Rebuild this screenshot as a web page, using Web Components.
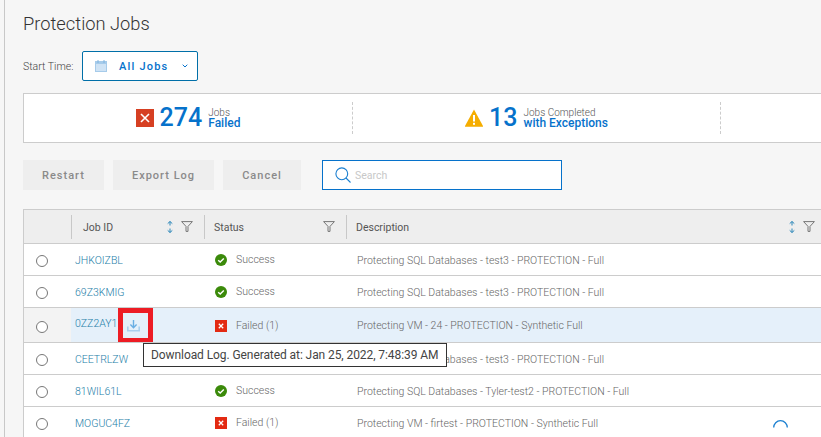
<!DOCTYPE html>
<html>
<head>
<meta charset="utf-8">
<title>Protection Jobs</title>
<style>
    html, body { margin: 0; height: 437px; overflow: hidden; background: #f6f6f6; }
</style>
</head>
<body>
<jobs-page>
    <jobs-toolbar slot="toolbar"></jobs-toolbar>
    <jobs-summary slot="summary">
        <summary-stat count="274" line1="Jobs" line2="Failed" icon="failed"></summary-stat>
        <summary-stat count="13" line1="Jobs Completed" line2="with Exceptions" icon="warning"></summary-stat>
        <summary-stat></summary-stat>
    </jobs-summary>
    <jobs-actions slot="actions"></jobs-actions>
    <jobs-table slot="table">
        <job-row job="JHKOIZBL" status="Success" text="Protecting SQL Databases - test3 - PROTECTION - Full"></job-row>
        <job-row job="69Z3KMIG" status="Success" text="Protecting SQL Databases - test3 - PROTECTION - Full"></job-row>
        <job-row job="0ZZ2AY1" status="Failed (1)" text="Protecting VM - 24 - PROTECTION - Synthetic Full" selected tip="Download Log. Generated at: Jan 25, 2022, 7:48:39 AM"></job-row>
        <job-row job="CEETRLZW" status="Failed (1)" text="Protecting SQL Databases - test3 - PROTECTION - Full" no-status></job-row>
        <job-row job="81WIL61L" status="Success" text="Protecting SQL Databases - Tyler-test2 - PROTECTION - Full"></job-row>
        <job-row job="MOGUC4FZ" status="Failed (1)" text="Protecting VM - firtest - PROTECTION - Synthetic Full" busy></job-row>
    </jobs-table>
</jobs-page>

<script>
const ICONS = {
    failed: `<svg viewBox="0 0 18 18" width="18" height="18"><rect width="18" height="18" fill="#d63f22"/><path d="M5 5l8 8M13 5l-8 8" stroke="#fff" stroke-width="1.6"/></svg>`,
    warning: `<svg viewBox="0 0 18 18" width="18" height="18"><path d="M9 .5L18 17a.6.6 0 0 1-.5.8H.5A.6.6 0 0 1 0 17z" fill="#f5ad00"/><rect x="8" y="6" width="2" height="6.5" fill="#fff"/><rect x="8" y="13.8" width="2" height="2" fill="#fff"/></svg>`,
    success: `<svg viewBox="0 0 12 12" width="12" height="12"><circle cx="6" cy="6" r="6" fill="#3b8a0a"/><path d="M3.2 6.2l2 1.9 3.6-3.6" fill="none" stroke="#fff" stroke-width="1.4"/></svg>`,
    error: `<svg viewBox="0 0 12 12" width="12" height="12"><rect width="12" height="12" fill="#e32a12"/><path d="M3.8 3.8l4.4 4.4M8.2 3.8L3.8 8.2" stroke="#fff" stroke-width="1.3"/></svg>`,
    calendar: `<svg viewBox="0 0 12 12" width="12" height="12"><rect x=".5" y="1.5" width="11" height="10" fill="#cfe3f5" stroke="#a6cbea"/><rect x="1" y="2" width="10" height="2" fill="#a6cbea"/><path d="M3 0v3M9 0v3" stroke="#7fb3e0"/></svg>`,
    chevron: `<svg viewBox="0 0 6 4" width="6" height="4"><path d="M.7.7L3 3 5.3.7" fill="none" stroke="#0672cb"/></svg>`,
    search: `<svg viewBox="0 0 16 16" width="16" height="16"><circle cx="6.8" cy="6.8" r="5.9" fill="none" stroke="#1a7fd0" stroke-width="1.1"/><path d="M11 11l4.5 4.5" stroke="#1a7fd0" stroke-width="1.1"/></svg>`,
    sort: `<svg viewBox="0 0 8 12" width="8" height="12"><path d="M4 .5v4M1.7 2.6L4 .5l2.3 2.1M4 7.5v4M1.7 9.4L4 11.5l2.3-2.1" fill="none" stroke="#2a86b8"/></svg>`,
    filter: `<svg viewBox="0 0 12 11" width="12" height="11"><path d="M.6.6h10.8L7 5.4V10.4H5V5.4z" fill="none" stroke="#777"/></svg>`,
    download: `<svg viewBox="0 0 13 12" width="13" height="12"><path d="M6.5 0v7.5M3.4 4.6l3.1 3.1 3.1-3.1" fill="none" stroke="#6aaee3" stroke-width="1.4"/><path d="M.8 6.5v4.2h11.4V6.5" fill="none" stroke="#a9d0ef" stroke-width="1.6"/></svg>`
};

class JobsPage extends HTMLElement {
    constructor() {
        super();
        this.shadow = this.attachShadow({ mode: 'open' });
        this.shadow.innerHTML = /*html*/ `
            <style>
                :host {
                    display: block;
                    box-sizing: border-box;
                    height: 437px;
                    width: 821px;
                    overflow: hidden;
                    position: relative;
                    padding-left: 23px;
                    font-family: Roboto, "Liberation Sans", sans-serif;
                    color: #444;
                    background: #f6f6f6;
                }
                :host::before {
                    content: "";
                    position: absolute;
                    left: 4px;
                    top: 0;
                    bottom: 0;
                    width: 1px;
                    background: #c8c8c8;
                }
                h1 {
                    margin: 0;
                    padding-top: 12px;
                    height: 39px;
                    box-sizing: border-box;
                    font-size: 18.3px;
                    line-height: 24px;
                    font-weight: 300;
                    color: #333;
                }
                .stack { width: 800px; }
            </style>
            <div class="stack">
                <h1>Protection Jobs</h1>
                <slot name="toolbar"></slot>
                <slot name="summary"></slot>
                <slot name="actions"></slot>
                <slot name="table"></slot>
            </div>
        `;
    }
}

class JobsToolbar extends HTMLElement {
    constructor() {
        super();
        this.shadow = this.attachShadow({ mode: 'open' });
        this.shadow.innerHTML = /*html*/ `
            <style>
                :host {
                    display: flex;
                    align-items: center;
                    height: 30px;
                    margin: 12px 0;
                    font-size: 10.5px;
                    color: #555;
                }
                .start { width: 59px; font-weight: 300; color: #444; }
                .picker {
                    box-sizing: border-box;
                    width: 116px;
                    height: 30px;
                    border: 1px solid #006fa8;
                    border-radius: 2px;
                    background: #fff;
                    display: flex;
                    align-items: center;
                    padding-left: 12px;
                    color: #0672cb;
                    font-size: 11px;
                    font-weight: 500;
                    letter-spacing: 1.2px;
                }
                .label { margin-left: 12px; margin-right: 14px; }
            </style>
            <span class="start">Start Time:</span>
            <div class="picker">${ICONS.calendar}<span class="label">All Jobs</span>${ICONS.chevron}</div>
        `;
    }
}

class JobsSummary extends HTMLElement {
    constructor() {
        super();
        this.shadow = this.attachShadow({ mode: 'open' });
        this.shadow.innerHTML = /*html*/ `
            <style>
                :host {
                    display: grid;
                    grid-template-columns: 329px 368px 1fr;
                    box-sizing: border-box;
                    height: 50px;
                    border: 1px solid #ccc;
                    background: #fff;
                    padding: 8px 0;
                }
            </style>
            <slot></slot>
        `;
    }
}

class SummaryStat extends HTMLElement {
    constructor() {
        super();
        this.shadow = this.attachShadow({ mode: 'open' });
    }

    connectedCallback() {
        const count = this.getAttribute('count');
        if (!count) return;
        this.shadow.innerHTML = /*html*/ `
            <style>
                :host {
                    display: flex;
                    align-items: center;
                    justify-content: center;
                    gap: 6px;
                    border-right: 1px dashed #ccc;
                    height: 32px;
                }
                svg { display: block; }
                .count { font-size: 25px; line-height: 32px; font-weight: 500; color: #0672cb; }
                .text { display: flex; flex-direction: column; }
                .small { font-size: 10px; line-height: 9px; font-weight: 300; color: #555; margin-top: 1px; }
                .big { font-size: 12px; line-height: 12px; font-weight: 500; color: #0672cb; }
            </style>
            ${ICONS[this.getAttribute('icon')]}
            <span class="count">${count}</span>
            <div class="text">
                <span class="small">${this.getAttribute('line1')}</span>
                <span class="big">${this.getAttribute('line2')}</span>
            </div>
        `;
    }
}

class JobsActions extends HTMLElement {
    constructor() {
        super();
        this.shadow = this.attachShadow({ mode: 'open' });
        this.shadow.innerHTML = /*html*/ `
            <style>
                :host {
                    display: flex;
                    align-items: center;
                    gap: 9px;
                    height: 30px;
                    margin: 17px 0 19px;
                }
                .btn {
                    box-sizing: border-box;
                    height: 30px;
                    background: #eeeeee;
                    color: #8a8a8a;
                    font-size: 11px;
                    font-weight: 500;
                    letter-spacing: 1px;
                    display: flex;
                    align-items: center;
                    justify-content: center;
                }
                .search {
                    box-sizing: border-box;
                    width: 240px;
                    height: 30px;
                    margin-left: 12px;
                    border: 1px solid #0672cb;
                    background: #fff;
                    display: flex;
                    align-items: center;
                    gap: 4px;
                    padding-left: 12px;
                    font-size: 10.5px;
                    color: #c8c8c8;
                }
                svg { display: block; }
            </style>
            <div class="btn" style="width:81px">Restart</div>
            <div class="btn" style="width:101px">Export Log</div>
            <div class="btn" style="width:78px">Cancel</div>
            <div class="search">${ICONS.search}<span>Search</span></div>
        `;
    }
}

class JobsTable extends HTMLElement {
    constructor() {
        super();
        this.shadow = this.attachShadow({ mode: 'open' });
        this.shadow.innerHTML = /*html*/ `
            <style>
                :host {
                    display: block;
                    border: 1px solid #ccc;
                    border-right: 0;
                    background: #fff;
                    font-size: 10.5px;
                }
                .head {
                    display: grid;
                    grid-template-columns: 47px 133px 142px 1fr;
                    height: 33px;
                    background: #eeeeee;
                    align-items: center;
                    color: #555;
                }
                .cell {
                    display: flex;
                    align-items: center;
                    gap: 7px;
                    height: 24px;
                    box-sizing: border-box;
                    border-left: 1px solid #c8c8c8;
                    padding: 0 11px 0 9px;
                }
                .cell span { flex: 1; padding-top: 1px; }
                .cell.job { padding-left: 11px; }
                .cell.desc { padding-right: 8px; }
                svg { display: block; }
            </style>
            <div class="head">
                <div></div>
                <div class="cell job"><span>Job ID</span>${ICONS.sort}${ICONS.filter}</div>
                <div class="cell"><span>Status</span>${ICONS.filter}</div>
                <div class="cell desc"><span>Description</span>${ICONS.sort}${ICONS.filter}</div>
            </div>
            <slot></slot>
        `;
    }
}

class JobRow extends HTMLElement {
    constructor() {
        super();
        this.shadow = this.attachShadow({ mode: 'open' });
    }

    connectedCallback() {
        const status = this.getAttribute('status');
        const icon = status === 'Success' ? ICONS.success : ICONS.error;
        const tip = this.getAttribute('tip');
        this.shadow.innerHTML = /*html*/ `
            <style>
                :host {
                    display: grid;
                    grid-template-columns: 47px 133px 142px 1fr;
                    box-sizing: border-box;
                    height: 32px;
                    border-top: 1px solid #ccc;
                    align-items: center;
                    position: relative;
                    color: #666;
                    font-weight: 300;
                }
                :host([selected]) { height: 35px; background: #e5f0fa; }
                .pick {
                    height: 100%;
                    display: flex;
                    align-items: center;
                    justify-content: center;
                    padding-top: 3px;
                    box-sizing: border-box;
                    padding-right: 11px;
                }
                :host([selected]) .pick { background: #f3f3f3; }
                .radio {
                    box-sizing: border-box;
                    width: 12px;
                    height: 12px;
                    border: 1px solid #777;
                    border-radius: 50%;
                    background: #fff;
                }
                .id { padding: 1px 0 0 4px; color: #1d7ea8; }
                :host([selected]) .id { padding: 0 0 3px 4px; }
                .status { display: flex; align-items: center; gap: 9px; padding-left: 11px; }
                .status svg { display: block; margin-top: 1px; }
                .desc { padding: 1px 0 0 11px; }
                :host([selected]) .desc { padding-top: 0; }
                .marker {
                    position: absolute;
                    left: 94px;
                    top: 0;
                    box-sizing: border-box;
                    width: 35px;
                    height: 35px;
                    padding-right: 4px;
                    border: 5px solid #ed1c24;
                    display: flex;
                    align-items: center;
                    justify-content: center;
                }
                .tooltip {
                    position: absolute;
                    left: 119px;
                    top: 35px;
                    z-index: 2;
                    box-sizing: border-box;
                    height: 24px;
                    width: 304px;
                    border: 1px solid #333;
                    background: #fff;
                    color: #444;
                    font-size: 12px;
                    letter-spacing: -0.08px;
                    font-weight: 400;
                    line-height: 22px;
                    padding-left: 7px;
                    white-space: nowrap;
                }
                .spinner { position: absolute; left: 749px; top: 13px; }
                svg { display: block; }
            </style>
            <div class="pick"><div class="radio"></div></div>
            <div class="id">${this.getAttribute('job')}</div>
            <div class="status">${this.hasAttribute('no-status') ? '' : `${icon}<span>${status}</span>`}</div>
            <div class="desc">${this.getAttribute('text')}</div>
            ${tip ? `<div class="marker">${ICONS.download}</div><div class="tooltip">${tip}</div>` : ''}
            ${this.hasAttribute('busy') ? `<svg class="spinner" width="15" height="15" viewBox="0 0 15 15"><path d="M.7 7.5A6.8 6.8 0 0 1 14.3 7.5" fill="none" stroke="#1a7fd0" stroke-width="1.3"/></svg>` : ''}
        `;
    }
}

customElements.define('jobs-page', JobsPage);
customElements.define('jobs-toolbar', JobsToolbar);
customElements.define('jobs-summary', JobsSummary);
customElements.define('summary-stat', SummaryStat);
customElements.define('jobs-actions', JobsActions);
customElements.define('jobs-table', JobsTable);
customElements.define('job-row', JobRow);
</script>
</body>
</html>
